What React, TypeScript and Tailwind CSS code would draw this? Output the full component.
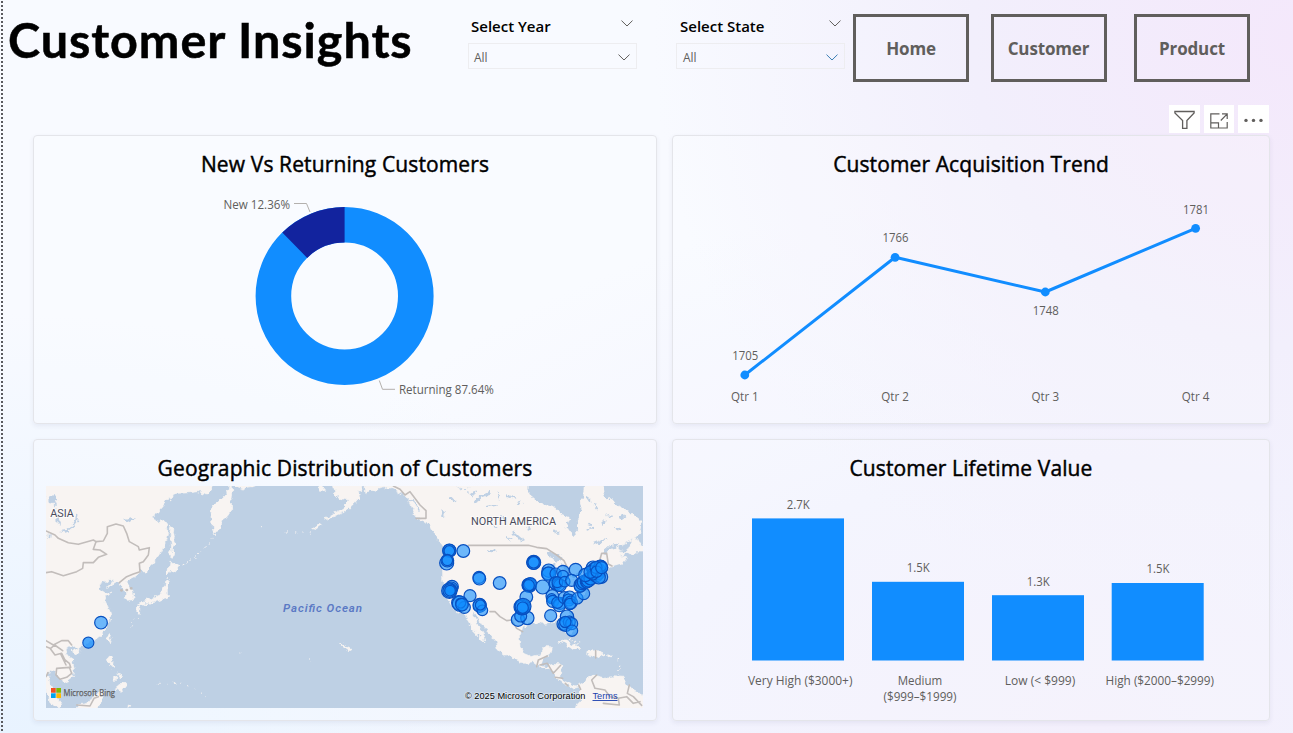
import React from "react";

const UI = "font-['Open_Sans','Noto_Sans',sans-serif]";

function Chevron({ className = "" }: { className?: string }) {
  return (
    <svg width="12" height="7" viewBox="0 0 12 7" fill="none" className={className}>
      <path d="M0.5 0.6 L6 6 L11.5 0.6" stroke="currentColor" strokeWidth="1" />
    </svg>
  );
}

function Slicer({ label, accent }: { label: string; accent?: boolean }) {
  return (
    <div className="w-[169px] pt-4">
      <div className={`flex h-[27px] items-start justify-between pr-[4px] ${accent ? "pl-[4px]" : "pl-[3px]"}`}>
        <span className="text-[15px] leading-[21px] font-semibold tracking-[0px] text-black">{label}</span>
        <Chevron className="mt-1 text-[#605e5c]" />
      </div>
      <div className={`flex h-[26px] items-center justify-between border border-[#ededf0] pt-[3px] pr-[6px] ${accent ? "pl-[6px]" : "pl-[5px]"}`}>
        <span className="text-[12px] text-[#605e5c]">All</span>
        <Chevron className={accent ? "text-[#3c7fb5]" : "text-[#605e5c]"} />
      </div>
    </div>
  );
}

function NavButton({ label, className = "" }: { label: string; className?: string }) {
  return (
    <button
      className={`mt-[14px] h-[68px] w-[116px] shrink-0 border-[3px] border-[#605e5c] pt-[2px] text-[17px] font-bold tracking-[-0.15px] text-[#605e5c] ${className}`}
    >
      {label}
    </button>
  );
}

function Card({ title, children }: { title: string; children: React.ReactNode }) {
  return (
    <section className="flex flex-col overflow-hidden rounded-[4px] border border-[#e4e5ea] bg-white/20 shadow-[0_2px_5px_rgba(60,70,110,0.08)]">
      <h2 className="flex h-[46px] shrink-0 items-end justify-center pb-[4px] text-[21px] leading-[28px] font-normal tracking-[0.12px] text-black [-webkit-text-stroke:0.45px_black]">
        {title}
      </h2>
      {children}
    </section>
  );
}

type LabelProps = { x: number; y: number; w: number; children: string; size?: number };

function Label({ x, y, w, children, size = 12 }: LabelProps) {
  return (
    <text x={x - w / 2} y={y} textLength={w} lengthAdjust="spacingAndGlyphs" fontSize={size} fill="#605e5c">
      {children}
    </text>
  );
}

function DonutChart() {
  return (
    <svg width="622" height="240" viewBox="34 182 622 240" className="block">
      <circle cx="344.6" cy="296" r="71.2" fill="none" stroke="#118dff" strokeWidth="35.6" />
      <path d="M344.6 207 A89 89 0 0 0 282.3 232.5 L307.2 257.9 A53.4 53.4 0 0 1 344.6 242.6 Z" fill="#12239e" />
      <path d="M294 203.5 H306.5 L310 212" fill="none" stroke="#b3b0ad" />
      <path d="M395 389.3 H382.5 L379.3 380.5" fill="none" stroke="#b3b0ad" />
      <Label x={256.8} y={209} w={66.5}>New 12.36%</Label>
      <Label x={446.4} y={394} w={95}>Returning 87.64%</Label>
    </svg>
  );
}

const quarters = [
  { name: "Qtr 1", value: "1705", x: 744.8, y: 375, ly: 360 },
  { name: "Qtr 2", value: "1766", x: 895.1, y: 257.3, ly: 242 },
  { name: "Qtr 3", value: "1748", x: 1045.3, y: 292, ly: 315 },
  { name: "Qtr 4", value: "1781", x: 1195.6, y: 228.3, ly: 214 },
];

function TrendChart() {
  return (
    <svg width="596" height="240" viewBox="673 182 596 240" className="block">
      <polyline points={quarters.map((q) => `${q.x},${q.y}`).join(" ")} fill="none" stroke="#118dff" strokeWidth="3" strokeLinejoin="round" />
      {quarters.map((q) => (
        <g key={q.name}>
          <circle cx={q.x} cy={q.y} r="4.4" fill="#118dff" />
          <Label x={q.x + 0.4} y={q.ly} w={26}>{q.value}</Label>
          <Label x={q.x} y={401} w={27.5}>{q.name}</Label>
        </g>
      ))}
    </svg>
  );
}

const bands = [
  { x: 752, top: 518.4, ly: 509, value: "2.7K" },
  { x: 872, top: 581.8, ly: 572, value: "1.5K" },
  { x: 992, top: 595.2, ly: 586, value: "1.3K" },
  { x: 1111.7, top: 583, ly: 573, value: "1.5K" },
];

function LifetimeChart() {
  return (
    <svg width="596" height="234" viewBox="673 486 596 234" className="block">
      {bands.map((b) => (
        <g key={b.x}>
          <rect x={b.x} y={b.top} width="92" height={660.5 - b.top} fill="#118dff" />
          <Label x={b.x + 46.3} y={b.ly} w={23}>{b.value}</Label>
        </g>
      ))}
      <Label x={800.2} y={685} w={104.5}>Very High ($3000+)</Label>
      <Label x={920} y={685} w={44.5}>Medium</Label>
      <Label x={920} y={701} w={73}>($999–$1999)</Label>
      <Label x={1040} y={685} w={70.5}>{"Low (< $999)"}</Label>
      <Label x={1159.8} y={685} w={108.5}>High ($2000–$2999)</Label>
    </svg>
  );
}

/* Coastlines are drawn on a grid of three units to the pixel. */
const asiaLand = [
  "20,130 540,130 550,168 540,178 530,192 505,185 480,188 440,190 420,200 408,220 390,240 375,258 362,265 385,274 400,270 412,285 414,300 408,330 400,350 390,375 370,400 355,415 345,423 332,422 325,432 315,440 300,448 288,457 295,470 308,480 312,500 305,512 292,514 285,500 290,490 283,478 275,468 262,462 255,456 245,462 230,470 248,452 240,446 225,457 208,468 212,480 228,490 245,486 240,495 222,500 228,515 235,530 240,545 242,560 240,575 230,590 222,605 210,618 195,630 175,640 160,642 150,645 145,655 140,648 128,650 115,652 105,660 110,672 120,685 130,700 134,725 130,740 115,752 100,760 98,750 85,745 78,730 70,725 60,720 55,735 60,760 70,780 80,800 95,820 90,830 75,830 60,815 50,790 48,780 20,780",
  "602,140 605,185 603,205 605,235 595,252 580,268 570,290 555,315 548,300 545,270 540,245 545,232 565,215 580,200 598,178",
  "600,140 680,140 676,168 650,172 640,180 620,172",
  "423,285 432,290 430,310 438,345 430,350 425,365 424,345 420,310",
  "424,360 434,375 428,380 420,374",
  "420,393 430,402 447,412 440,422 425,423 410,430 412,415 418,410",
  "408,445 418,455 412,475 412,500 400,508 385,512 370,515 360,520 345,519 340,525 326,524 345,512 365,505 380,495 395,488 400,475 405,465",
  "320,528 332,530 328,547 318,543",
  "340,524 356,522 348,531",
  "240,610 244,618 238,638 230,630",
  "130,657 147,655 146,668 135,671",
  "235,678 248,682 245,700 252,712 238,706",
  "248,742 258,738 256,752 248,750",
  "262,732 276,738 270,748",
  "262,765 280,758 286,772 272,790 262,780 250,778",
  "138,860 138,834 148,824 160,822 185,815 190,800 200,790 215,785 220,800 210,815 205,834 205,860",
  "295,822 302,826 300,834 294,834",
  "862,172 878,170 884,178 870,182",
  "848,296 868,280 874,284 856,298",
  "884,266 915,248 940,236 958,212 962,226 945,242 915,256 890,270",
  "924,638 946,646 964,656 960,662 940,648",
];

const americaLand = [
  "-28,130 68,130 66,168 58,185 64,195 50,212 30,232 12,246 0,240 20,225 28,210 5,206 -15,190",
  "68,130 75,192 85,185 110,178 150,170 165,180 180,190 205,205 215,235 235,265 260,275 275,295 285,315 295,335 305,345 315,360 305,385 308,420 308,450 315,490 335,525 350,545 378,550 390,590 410,610 425,628 435,632 430,615 415,590 405,565 395,550 404,548 415,565 430,590 450,610 470,635 475,660 490,672 520,685 550,700 580,695 600,710 640,720 645,740 670,760 700,775 716,770 722,782 715,795 725,810 710,825 700,860 940,860 940,812 880,780 865,765 850,742 820,740 790,742 770,738 755,735 740,748 720,762 705,768 690,760 675,755 660,740 665,705 640,703 620,710 600,705 605,690 630,670 635,650 610,650 598,675 575,680 550,670 540,650 538,620 545,590 560,585 580,575 610,580 640,575 655,572 665,590 680,612 695,618 702,605 697,585 685,565 690,545 720,510 732,490 735,475 750,460 765,440 790,430 795,414 815,408 850,398 858,384 840,378 862,366 840,362 832,352 860,338 880,325 895,315 900,300 905,280 895,262 870,250 850,240 830,225 805,195 790,130",
  "862,366 872,345 884,318 892,330 908,345 930,350 930,366 890,366 870,372",
  "655,632 675,630 700,642 722,655 700,656 680,642",
  "742,664 765,662 792,674 770,682 740,674",
  "803,675 818,675 816,680 804,680",
];

const americaWater = [
  "567,130 565,195 590,215 620,225 660,238 665,255 690,265 680,290 700,318 715,300 710,270 725,240 720,215 730,190 735,130",
  "783,130 790,185 800,208 812,200 790,130",
  "400,215 420,200 450,185 452,195 425,205 402,220",
  "378,185 395,190 410,180 400,200",
  "350,168 370,178 390,172 372,182",
  "300,235 318,245 312,260 322,270 306,256",
  "485,255 500,262 498,280 490,270",
  "520,300 545,322 552,338 540,330 522,312",
  "440,362 468,358 462,366 445,368",
  "615,370 650,366 668,384 650,398 640,384 622,380",
  "625,402 640,400 640,440 628,445",
  "665,400 690,405 688,430 670,420",
  "690,440 720,428 730,432 705,448",
  "470,185 480,200 474,210",
  "530,220 548,214 540,228",
  "784,278 796,266 800,276 790,288",
  "740,284 756,280 752,288",
  "838,258 850,252 856,262 844,270",
  "760,340 790,328 800,330 776,348",
  "786,366 810,345 840,340 834,350 812,358 796,372",
];

const asiaWater = [
  "90,303 108,300 128,285 136,268 140,248 146,258 140,275 125,295 108,308",
  "50,200 78,195 88,208 72,214 80,235 68,222 54,214",
  "78,250 90,275 88,292 80,275",
  "283,268 300,262 318,266 300,277",
  "52,318 62,315 60,328",
];

const asiaBorders = [
  "M48 303L75 315L85 325L115 338L145 343L190 330L198 335L190 358L210 360L230 373L205 382L190 398L160 398L158 415L140 425L100 437L65 425L48 428",
  "M198 335L220 333L232 310L232 290L258 282L280 288L290 310L298 335L325 350L328 360L358 353L355 375L340 395L328 400L330 425L310 432L290 440L268 458",
  "M48 632L70 645L95 632L115 632L125 645M48 650L60 655L75 675L95 670L105 690L118 700L122 712M80 715L118 712L125 730L110 742L90 748L78 735L80 715M62 655L74 645L98 662M92 672L108 705M140 825L180 828L192 805L205 800",
  "M48 740L54 728",
];

const americaBorders = [
  "M160 168L180 178L195 195L210 185L240 225L258 242L258 265L228 265",
  "M385 346H565L590 352L620 356L650 375L672 392L680 408",
  "M450 545L465 545L480 560L500 572L515 570L530 595L548 605",
  "M720 425L760 400L778 395L785 370L800 370L805 402L816 408",
  "M590 710L595 690L622 678M600 705L622 700L640 730L662 706M645 742L668 745M676 760L684 768",
  "M770 735L755 750L765 775L795 780L810 800L835 805L860 800L880 820L900 815M835 805L838 825L790 820M868 765L862 790L880 800L905 826M716 765L722 778M767 662V684",
];

/* [x, y, r] on the same grid, relative to the United States view. */
const dots: [number, number, number][] = [
  [88, 62, 19], [88, 62, 20], [88, 63, 16], [130, 63, 19], [80, 99, 21], [82, 92, 19], [82, 91, 16],
  [177, 142, 18], [178, 146, 19], [239, 159, 19], [341, 97, 21], [341, 98, 20], [341, 97, 17],
  [96, 170, 19], [94, 175, 19], [88, 182, 23], [89, 182, 20], [90, 182, 16],
  [150, 197, 18], [116, 218, 21], [120, 221, 23], [133, 232, 18], [122, 219, 15], [126, 224, 19],
  [179, 224, 19], [179, 227, 20], [187, 241, 16], [181, 225, 15],
  [326, 165, 20], [328, 166, 21], [331, 162, 19], [326, 166, 17], [368, 171, 21], [319, 201, 19],
  [294, 269, 20], [322, 264, 20], [302, 258, 18], [306, 231, 24], [306, 232, 21], [309, 229, 24], [308, 233, 17],
  [386, 122, 20], [384, 130, 19], [386, 132, 21], [407, 131, 17], [429, 125, 19], [429, 137, 16], [467, 119, 19],
  [403, 160, 17], [408, 160, 20], [416, 164, 19], [420, 166, 19], [412, 157, 16], [434, 155, 16], [455, 151, 18],
  [397, 198, 19], [395, 206, 15], [398, 214, 18], [420, 220, 18], [418, 226, 19], [412, 218, 17], [433, 203, 18], [449, 202, 19], [446, 210, 18], [453, 217, 19], [450, 222, 17], [472, 205, 17], [491, 191, 18],
  [392, 257, 18], [441, 260, 20], [430, 282, 19], [437, 283, 21], [448, 276, 18], [455, 281, 18], [436, 276, 17], [456, 302, 17],
  [482, 165, 20], [480, 170, 17], [486, 160, 19], [492, 156, 20], [500, 155, 19], [500, 158, 16], [505, 150, 21], [512, 145, 20], [496, 135, 20],
  [519, 113, 20], [525, 119, 22], [520, 132, 18], [528, 135, 21], [534, 128, 21], [536, 120, 20], [542, 112, 21], [541, 108, 18], [544, 141, 19], [536, 142, 20], [519, 135, 15], [511, 126, 19], [528, 112, 18], [530, 125, 17], [545, 113, 18],
];

function CustomerMap() {
  return (
    <svg
      width="597"
      height="222"
      viewBox="46 486 597 222"
      className="ml-3 block"
      fontFamily="Roboto, 'Noto Sans', sans-serif"
    >
      <defs>
        <filter id="coast" filterUnits="userSpaceOnUse" x="30" y="470" width="630" height="255">
          <feTurbulence type="fractalNoise" baseFrequency="0.16" numOctaves="3" seed="4" result="n" />
          <feDisplacementMap in="SourceGraphic" in2="n" scale="7" xChannelSelector="R" yChannelSelector="G" />
        </filter>
      </defs>
      <rect x="46" y="486" width="597" height="222" fill="#bed0e4" />
      <g filter="url(#coast)">
        <g transform="translate(30 430) scale(0.33333)" strokeLinejoin="round">
          {asiaLand.map((p) => <polygon key={p} points={p} fill="#f8f4f2" stroke="#f8f4f2" strokeWidth="2" />)}
          {asiaWater.map((p) => <polygon key={p} points={p} fill="#bed0e4" />)}
          <path d="M455 408L485 390L510 370L528 350L548 322" fill="none" stroke="#f8f4f2" strokeWidth="3" strokeDasharray="6 9" />
          <path d="M770 306H845M690 290H698M385 760H460L530 800M320 565L300 595M632 664H638M840 690H846" fill="none" stroke="#f8f4f2" strokeWidth="3" strokeDasharray="4 18" />
        </g>
        <g transform="translate(340 430) scale(0.33333)" strokeLinejoin="round">
          {americaLand.map((p) => <polygon key={p} points={p} fill="#f8f4f2" stroke="#f8f4f2" strokeWidth="2" />)}
          {americaWater.map((p) => <polygon key={p} points={p} fill="#bed0e4" />)}
          <path d="M205 205L225 222L238 245M218 210L230 232M280 312L300 340" fill="none" stroke="#bed0e4" strokeWidth="4" />
          <path d="M690 628L720 640M835 690L838 735" fill="none" stroke="#f8f4f2" strokeWidth="4" strokeDasharray="5 9" />
          <path d="M440 230L470 225M500 195L525 205M460 285L475 292M760 220L775 240M800 260L815 255M740 300L760 295M820 290L840 300M590 260L600 275M560 300L575 296M640 300L655 310M740 200L750 215M330 200L345 215M500 320L515 330" fill="none" stroke="#bed0e4" strokeWidth="5" />
        </g>
      </g>
      <g fill="none" stroke="#c2bdbb" strokeWidth="4.8" strokeLinejoin="round" strokeLinecap="round">
        <g transform="translate(30 430) scale(0.33333)">
          {asiaBorders.map((d) => <path key={d} d={d} />)}
          <path d="M274 481h1M290 480h1M303 475h1" strokeWidth="8" />
        </g>
        <g transform="translate(340 430) scale(0.33333)">
          {americaBorders.map((d) => <path key={d} d={d} />)}
        </g>
      </g>

      <g fill="#4a4b5c" fontSize="11.5" stroke="#ffffff" strokeWidth="2" paintOrder="stroke" strokeOpacity="0.6">
        <text x="50.3" y="517" textLength="23.5" lengthAdjust="spacingAndGlyphs">ASIA</text>
        <text x="471" y="525" textLength="85" lengthAdjust="spacingAndGlyphs">NORTH AMERICA</text>
      </g>
      <text x="283" y="612" textLength="79" fontSize="11.5" fontWeight="600" fontStyle="italic" fill="#5b79c4">Pacific Ocean</text>

      <g fill="#118dff" fillOpacity="0.6" stroke="#0850c0" strokeWidth="3.6" transform="translate(420 530) scale(0.33333)">
        {dots.map(([x, y, r], i) => <circle key={i} cx={x} cy={y} r={r} />)}
        <circle cx="-957" cy="278" r="19" />
        <circle cx="-995" cy="338" r="16.5" />
        <circle cx="-995" cy="338" r="15" strokeWidth="0" fillOpacity="0.35" />
      </g>

      <rect x="51" y="688" width="4.7" height="4.7" fill="#f25022" />
      <rect x="56.3" y="688" width="4.7" height="4.7" fill="#7fba00" />
      <rect x="51" y="693.3" width="4.7" height="4.7" fill="#00a4ef" />
      <rect x="56.3" y="693.3" width="4.7" height="4.7" fill="#ffb900" />
      <text x="63.5" y="696.4" textLength="51.5" lengthAdjust="spacingAndGlyphs" fontSize="9" fill="#5f5f5f" stroke="#5f5f5f" strokeWidth="0.25" fontFamily="'Open Sans', sans-serif">
        Microsoft Bing
      </text>
      <g fontSize="9" fontFamily="'Liberation Sans', sans-serif">
        <text x="465" y="699" textLength="120.5" lengthAdjust="spacingAndGlyphs" fill="#000" stroke="#fff" strokeWidth="1.5" strokeOpacity="0.5" paintOrder="stroke">
          © 2025 Microsoft Corporation
        </text>
        <text x="592.5" y="699" textLength="25" lengthAdjust="spacingAndGlyphs" fill="#1a3fae" textDecoration="underline">
          Terms
        </text>
      </g>
    </svg>
  );
}

function Toolbar() {
  return (
    <div className="flex h-7 justify-end gap-1 pr-6 text-[#605e5c]">
      <div className="flex w-[31px] items-center justify-center bg-white pt-[2px]">
        <svg width="22" height="20" viewBox="0 0 22 20" fill="none" stroke="currentColor" strokeWidth="1.3">
          <path d="M0.9 1.5H20.1V3L12.9 10.5V18.3H8.6V10.5L0.9 3Z" />
        </svg>
      </div>
      <div className="flex w-[30px] items-center justify-center bg-white pt-[3px]">
        <svg width="18" height="18" viewBox="0 0 18 18" fill="none" stroke="currentColor" strokeWidth="1.2">
          <path d="M9.5 1.8H0.8V16H17.2V10M0.8 10.8H8.5V16M10.8 8.5L17 2.2M12 1.8H17.2V7" />
        </svg>
      </div>
      <div className="flex w-[31px] items-center justify-center bg-white pt-px">
        <svg width="20" height="6" viewBox="0 0 20 6" fill="currentColor">
          <circle cx="2" cy="3.4" r="1.7" />
          <circle cx="9.5" cy="3.4" r="1.7" />
          <circle cx="17" cy="3.4" r="1.7" />
        </svg>
      </div>
    </div>
  );
}

export default function App() {
  return (
    <div
      className={`flex h-[733px] w-[1293px] overflow-hidden bg-[#f8faff] bg-[radial-gradient(ellipse_640px_620px_at_100%_5%,#f4e8fb_0%,#f2effc_50%,transparent_100%),radial-gradient(ellipse_700px_420px_at_0%_100%,#e8f3ff_0%,transparent_100%),radial-gradient(ellipse_900px_550px_at_85%_100%,#f3effc_0%,#f2f3fe_50%,transparent_100%)] ${UI}`}
    >
      <div className="ml-px w-[2px] shrink-0 bg-[repeating-linear-gradient(to_bottom,transparent_0_1px,#5a5a5e_1px_3px,transparent_3px_4px)]" />
      <div className="flex flex-1 flex-col">
        <header className="flex h-[105px] items-start">
          <h1 className="w-[465px] shrink-0 pt-[8px] pl-[5px] font-['Lato',sans-serif] text-[48.5px] leading-[62px] font-bold tracking-[0.95px] whitespace-nowrap text-black [-webkit-text-stroke:0.5px_black]">
            Customer Insights
          </h1>
          <Slicer label="Select Year" />
          <div className="w-[39px] shrink-0" />
          <Slicer label="Select State" accent />
          <NavButton label="Home" className="ml-2" />
          <NavButton label="Customer" className="ml-[21.5px]" />
          <NavButton label="Product" className="ml-[27.5px]" />
        </header>
        <Toolbar />
        <main className="mt-[2px] ml-[30px] grid w-[1237px] grid-cols-[624px_598px] grid-rows-[289px_282px] gap-[15px]">
          <Card title="New Vs Returning Customers"><DonutChart /></Card>
          <Card title="Customer Acquisition Trend"><TrendChart /></Card>
          <Card title="Geographic Distribution of Customers"><CustomerMap /></Card>
          <Card title="Customer Lifetime Value"><LifetimeChart /></Card>
        </main>
      </div>
    </div>
  );
}
